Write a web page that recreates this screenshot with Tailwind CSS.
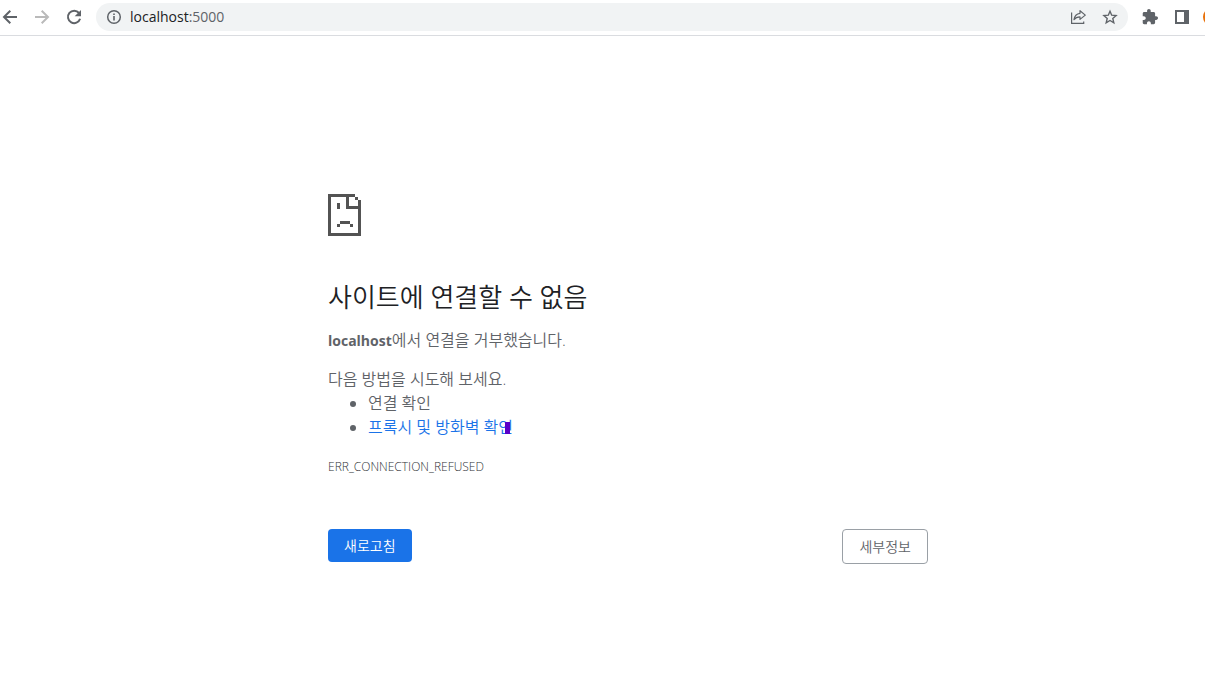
<!DOCTYPE html>
<html lang="ko">
<head>
<meta charset="utf-8">
<meta name="viewport" content="width=device-width, initial-scale=1">
<title>localhost</title>
<script src="https://cdn.jsdelivr.net/npm/@tailwindcss/browser@4"></script>
</head>
<body class="min-h-screen overflow-x-hidden bg-white font-['Open_Sans','Noto_Sans_CJK_KR',sans-serif] text-[#5f6368]">
<header class="flex h-9 items-center overflow-hidden border-b border-[#dadce0] pb-[2px]">
  <nav class="flex shrink-0 gap-3" aria-label="탐색">
    <button type="button" aria-label="뒤로" class="size-5"><svg class="size-5" viewBox="0 0 20 20" fill="none" stroke="#5f6368" stroke-width="2"><path d="M17 10H4M10.3 3.7 4 10l6.3 6.3"/></svg></button>
    <button type="button" aria-label="앞으로" class="size-5"><svg class="size-5" viewBox="0 0 20 20" fill="none" stroke="#bababa" stroke-width="2"><path d="M3 10h13M9.7 3.7 16 10l-6.3 6.3"/></svg></button>
    <button type="button" aria-label="새로고침" class="size-5"><svg class="size-5" viewBox="0 0 20 20"><path fill="none" stroke="#5f6368" stroke-width="2" d="M15 6a6.2 6.2 0 1 0 1.1 5.8"/><path fill="#5f6368" d="M17 3v6.3h-6.3z"/></svg></button>
  </nav>
  <div class="ml-3 flex h-7 min-w-0 grow items-center rounded-full bg-[#f1f3f4] px-[10px]">
    <svg class="size-4 shrink-0" viewBox="0 0 16 16"><circle cx="8" cy="8" r="6.3" fill="none" stroke="#5f6368" stroke-width="1.5"/><path fill="#5f6368" d="M7.2 7h1.6v4.5H7.2zM7.2 4.4h1.6V6H7.2z"/></svg>
    <a href="#" class="ml-2 grow text-sm text-[#202124]">localhost<span class="text-[#5f6368]">:5000</span></a>
    <button type="button" aria-label="공유" class="size-4"><svg class="size-4" viewBox="0 0 16 16" fill="none" stroke="#5f6368" stroke-width="1.2"><path d="M1.6 3.500v10.900h12.100v-2"/><path stroke-linejoin="round" d="M10 4.300V1.700l5.300 4.400-5.300 4.300V7.900c-2.800 0-4.600.8-6 2.800.5-3.500 2.400-6 6-6.400z"/></svg></button>
    <button type="button" aria-label="북마크" class="ml-4 size-4"><svg class="size-4" viewBox="0 0 16 16" fill="none" stroke="#5f6368" stroke-width="1.4"><path d="m8 2.200 1.700 4 4.400.4-3.300 2.900 1 4.300L8 11.500l-3.800 2.300 1-4.300-3.300-2.900 4.400-.4z"/></svg></button>
  </div>
  <div class="flex shrink-0 items-center pl-[14px]">
    <button type="button" aria-label="확장 프로그램" class="size-4"><svg class="size-4" viewBox="1 1 22 22" fill="#5f6368"><path d="M20.5 11H19V7c0-1.100-.9-2-2-2h-4V3.500C13 2.120 11.880 1 10.500 1S8 2.120 8 3.500V5H4c-1.100 0-1.990.9-1.990 2v3.800H3.500c1.490 0 2.700 1.210 2.700 2.700s-1.210 2.700-2.700 2.700H2V20c0 1.100.9 2 2 2h3.800v-1.500c0-1.490 1.210-2.700 2.700-2.700s2.700 1.210 2.700 2.700V22H17c1.100 0 2-.9 2-2v-4h1.500c1.380 0 2.500-1.120 2.500-2.500S21.880 11 20.500 11z"/></svg></button>
    <button type="button" aria-label="측면 패널" class="ml-4 size-4"><svg class="size-4" viewBox="0 0 16 16"><path fill="#5f6368" fill-rule="evenodd" d="M1 1h14v14H1zM3 3v10h7V3z"/></svg></button>
    <button type="button" aria-label="프로필" class="ml-3 h-5 w-[3px] overflow-hidden"><svg class="h-5 w-5 max-w-none" viewBox="0 0 20 20"><circle cx="10" cy="10" r="9" fill="#e8710a"/></svg></button>
  </div>
</header>
<main class="mx-auto w-full max-w-[600px] pt-[158px] min-[1000px]:ml-[328px]">
  <svg class="h-[42px] w-[33px]" viewBox="0 0 33 42" fill="#535353" shape-rendering="crispEdges"><path d="M0 0h27v3h-6v9h9V6h3v36H0zM3 3v36h27V15H18V3zM27 3h3v3h-3zM9 9h3v6H9zM12 27h10v3H12zM9 30h3v3H9zM22 30h3v3h-3z" fill-rule="evenodd"/></svg>
  <h1 class="mt-[45px] text-[26px] leading-8 font-[350] text-[#202124]">사이트에 연결할 수 없음</h1>
  <p class="mt-[15px] text-base leading-6 font-[350]"><strong class="text-[14px] font-bold">localhost</strong>에서 연결을 거부했습니다.</p>
  <div class="mt-[14px] text-base leading-6 font-[350]">
    <p>다음 방법을 시도해 보세요.</p>
    <ul class="list-disc pl-10">
      <li>연결 확인</li>
      <li><a href="#" class="relative text-[#1a73e8]">프록시 및 방화벽 확인<svg class="absolute right-[3px] bottom-1 h-3 w-[5px]" viewBox="0 0 5 12" fill="#5b00c8"><path d="M0 0h5v12H0z"/></svg></a></li>
    </ul>
  </div>
  <p class="mt-4 text-xs leading-6 font-light text-[#303236]">ERR_CONNECTION_REFUSED</p>
  <div class="mt-[50px] flex items-start justify-between text-[14px] leading-5 font-[350]">
    <button type="button" class="h-[33px] rounded bg-[#1a73e8] px-4 text-white">새로고침</button>
    <button type="button" class="h-[35px] rounded border border-[#9aa0a6] px-4">세부정보</button>
  </div>
</main>
</body>
</html>
